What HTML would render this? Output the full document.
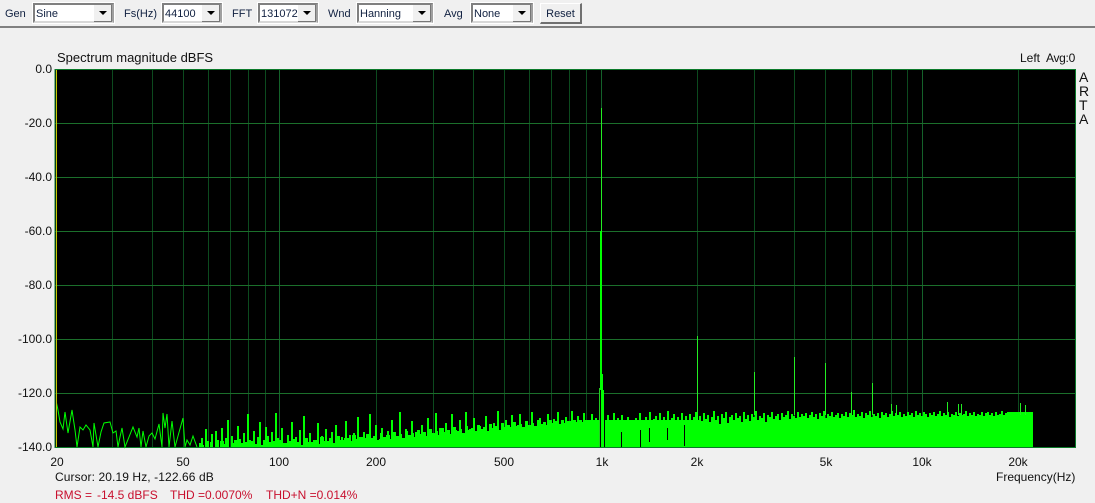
<!DOCTYPE html>
<html><head><meta charset="utf-8"><style>
html,body{margin:0;padding:0;background:#f0f0f0}
#p{position:relative;width:1095px;height:503px;overflow:hidden;background:#f0f0f0;font:12px/14px "Liberation Sans",sans-serif;color:#111}
.t{position:absolute;white-space:pre}
.r{text-align:right;width:50px;left:2px}
.c{text-align:center;width:60px}
.lb{font-size:11px;color:#102040;top:7px}
.cb{position:absolute;top:3px;height:20px;box-sizing:border-box;border:2px solid;border-color:#808080 #a0a0a0 #d8d8d8 #808080;background:#fff;outline:1px solid #fff;font-size:11px;line-height:19px;padding-left:1px;color:#102040}
.cb i{position:absolute;right:0;top:0;width:17px;height:16px;background:#f0f0f0;border-right:1px solid #777;border-bottom:1px solid #777}
.cb i:after{content:"";position:absolute;left:5px;top:6px;border:4px solid transparent;border-top:4px solid #000;border-bottom:0}
.red{color:#c8102e}
</style></head><body><div id="p">
<span class="t lb" style="left:5px">Gen</span>
<div class="cb" style="left:33px;width:81px">Sine<i></i></div>
<span class="t lb" style="left:124px">Fs(Hz)</span>
<div class="cb" style="left:162px;width:60px">44100<i></i></div>
<span class="t lb" style="left:232px">FFT</span>
<div class="cb" style="left:258px;width:60px">131072<i></i></div>
<span class="t lb" style="left:328px">Wnd</span>
<div class="cb" style="left:357px;width:76px">Hanning<i></i></div>
<span class="t lb" style="left:444px">Avg</span>
<div class="cb" style="left:471px;width:62px">None<i></i></div>
<div style="position:absolute;left:540px;top:3px;width:42px;height:21px;box-sizing:border-box;border:1px solid;border-color:#fff #707070 #707070 #fff;background:#f0f0f0;font-size:11px;line-height:20px;text-align:center;color:#102040;border-bottom-width:2px;border-right-width:2px">Reset</div>
<div style="position:absolute;left:0;top:26px;width:1095px;height:2px;background:#808080"></div>

<span class="t" style="left:57px;top:51px;font-size:13px">Spectrum magnitude dBFS</span>
<span class="t" style="left:1020px;top:51px">Left</span>
<span class="t" style="left:1046px;top:51px;letter-spacing:-.3px">Avg:0</span>
<span class="t" style="left:1079px;top:70px;font-size:14px">A</span>
<span class="t" style="left:1079px;top:84px;font-size:14px">R</span>
<span class="t" style="left:1079px;top:98px;font-size:14px">T</span>
<span class="t" style="left:1079px;top:112px;font-size:14px">A</span>

<span class="t r" style="top:62px">0.0</span>
<span class="t r" style="top:116px">-20.0</span>
<span class="t r" style="top:170px">-40.0</span>
<span class="t r" style="top:224px">-60.0</span>
<span class="t r" style="top:278px">-80.0</span>
<span class="t r" style="top:332px">-100.0</span>
<span class="t r" style="top:386px">-120.0</span>
<span class="t r" style="top:440px">-140.0</span>

<svg style="position:absolute;left:0;top:0" width="1095" height="503" shape-rendering="crispEdges">
<rect x="55" y="69" width="1021" height="379" fill="#000"/>
<path fill="none" stroke="#0c4a1e" d="M112.5 69V447M152.5 69V447M183.5 69V447M208.5 69V447M230.5 69V447M248.5 69V447M265.5 69V447M376.5 69V447M433.5 69V447M473.5 69V447M504.5 69V447M529.5 69V447M551.5 69V447M569.5 69V447M586.5 69V447M697.5 69V447M754.5 69V447M794.5 69V447M825.5 69V447M851.5 69V447M872.5 69V447M891.5 69V447M907.5 69V447M1018.5 69V447"/>
<path fill="none" stroke="#14622a" d="M279.5 69V447M601.5 69V447M922.5 69V447"/>
<path fill="none" stroke="#1b6f2b" d="M55 123.5H1075M55 177.5H1075M55 231.5H1075M55 285.5H1075M55 339.5H1075M55 393.5H1075"/>
<path fill="none" stroke="#0b7a2a" d="M55 69.5H1075.5V447.5H55Z"/>

<!-- low-frequency trace -->
<path shape-rendering="auto" fill="none" stroke="#00ff00" d="M56.5 403L58 410L60 422L63 429L65 412L68 433L72 410L75 430L77 447L80 427L83 430L86 425L90 430L93 447L94 423L98 447L101 432L104 423L110 422L113 433L116 431L118 447L120 437L122 428L125 447L133 427L137 437L139 428L141 447L143 431L146 447L149 436L152 433L155 439L159 424L162 447L163 413L165 428L167 414L169 447L172 421L175 447L178 436L183 418L185 447L187 440L190 445L193 436L197 447"/>
<!-- underlying mass -->
<path fill="#00ff00" d="M200 447V445h4V447h6V442h3V447h7V441h4V444h5V447h5V440h4V443h5V447h5V441h5V444h4V447h6V440h4V442h4V446h6V440h5V443h5V447h4V439h4V442h5V445h4V438h4V442h5V440h4V444h3V437h4V441h5V439h4V443h4V436h3V440h4V438h5V442h3V435h4V439h3V437h4V441h3V434h4V438h3V436h4V440h3V433h3V437h3V435h4V439h3V432h3V436h3V434h3V438h3V431h3V435h3V433h3V437h3V430h3V434h3V432h3V436h3V429h3V433h3V431h3V435h3V428h3V432h3V430h3V434h3V427h3V431h3V429h3V433h3V426h3V430h3V428h3V431h3V425h3V429h3V427h3V431h3V424h3V428h3V426h3V430h3V423h3V427h3V425h3V428h3V422h3V426h3V424h3V427h3V421h3V425h3V423h3V426h3V420h3V424h3V422h3V425h3V420h3V423h3V421h3V424h3V420h3V423h3V421h3V424h3V420h3V422h3V420h3V423h3V420H700V447Z"/>
<!-- noise floor, 2px bars -->
<path fill="#00ff00" d="M197 447V447h2V443h2V438h2V447h2V429h2V441h2V447h2V434h2V447h2V431h2V440h2V447h2V428h2V444h2V438h2V420h2V447h2V436h2V443h2V447h2V426h2V439h2V447h2V433h2V442h2V414h2V440h2V447h2V431h2V444h2V437h2V422h2V445h2V447h2V427h2V436h2V447h2V432h2V441h2V413h2V438h2V447h2V428h2V444h2V447h2V435h2V441h2V422h2V447h2V437h2V443h2V430h2V446h2V416h2V440h2V447h2V433h2V444h2V445h2V441h2V423h2V447h2V436h2V442h2V429h2V447h2V438h2V432h2V444h2V425h2V442h2V447h2V437h2V443h2V421h2V446h2V435h2V441h2V433h2V444h2V417h2V440h2V447h2V432h2V438h2V443h2V414h2V441h2V436h2V425h2V444h2V439h2V428h2V443h2V447h2V431h2V445h2V420h2V440h2V436h2V444h2V412h2V438h2V442h2V429h2V443h2V436h2V421h2V441h2V432h2V439h2V445h2V425h2V437h2V443h2V418h2V436h2V441h2V443h2V413h2V437h2V428h2V439h2V444h2V423h2V436h2V441h2V414h2V435h2V430h2V439h2V420h2V443h2V433h2V412h2V437h2V429h2V441h2V418h2V434h2V438h2V426h2V444h2V431h2V416h2V437h2V428h2V435h2V423h2V439h2V411h2V436h2V429h2V434h2V420h2V441h2V427h2V415h2V436h2V432h2V425h2V414h2V434h2V429h2V421h2V437h2V428h2V412h2V433h2V426h2V436h2V418h2V431h2V424h2V438h2V414h2V430h2V426h2V419h2V433h2V412h2V428h2V423h2V435h2V417h2V429h2V421h2V411h2V431h2V425h2V416h2V430h2V422h2V413h2V428h2V420h2V427h2V414h2V432h2V418h2V424h2V412h2V427h2V419h2V430h2V415h2V425h2V421h2V413h2V428h2V418h2V423h2V415h2V427h2V420h2V417h2V447h2V432h2V430h2V418h2V426h2V413h2V420h2V424h2V417h2V421h2V412h2V426h2V419h2V416h2V423h2V413h2V428h2V417h2V421h2V411h2V424h2V418h2V414h2V432h2V417h2V422h2V413h2V421h2V416h2V428h2V414h2V420h2V417h2V412h2V424h2V416h2V421h2V413h2V419h2V415h2V422h2V417h2V411h2V420h2V416h2V424h2V414h2V418h2V412h2V423h2V417h2V415h2V420h2V413h2V418h2V416h2V422h2V412h2V419h2V415h2V421h2V414h2V417h2V411h2V420h2V416h2V418h2V413h2V422h2V415h2V417h2V412h2V419h2V416h2V414h2V420h2V413h2V417h2V415h2V411h2V419h2V414h2V416h2V418h2V412h2V417h2V414h2V416h2V413h2V418h2V415h2V412h2V417h2V414h2V419h2V413h2V416h2V411h2V418h2V414h2V416h2V412h2V417h2V415h2V413h2V418h2V414h2V416h2V412h2V417h2V413h2V415h2V410h2V417h2V414h2V416h2V412h2V418h2V413h2V415h2V411h2V417h2V414h2V416h2V413h2V418h2V412h2V415h2V413h2V417h2V414h2V411h2V416h2V413h2V415h2V412h2V417h2V414h2V416h2V412h2V415h2V413h2V417h2V411h2V415h2V413h2V416h2V412h2V414h2V417h2V413h2V415h2V412h2V416h2V414h2V411h2V416h2V413h2V415h2V412h2V417h2V414h2V415h2V412h2V416h2V413h2V415h2V414h2V411h2V416h2V413h2V415h2V412h2V416h2V414h2V415h2V412h2V416h2V413h2V412h2V415h2V413h2V416h2V412h2V415h2V414h2V411h2V415h2V413h2V412H1033V447Z"/>
<!-- dropouts -->
<path fill="none" stroke="#000" d="M600.5 390V447M604.5 400V447M621.5 432V447M640.5 430V447M649.5 428V442M667.5 428V440M684.5 425V446"/>
<!-- peaks -->
<path fill="none" stroke="#22ee22" d="M601.5 108V231"/>
<rect x="600" y="231" width="2" height="159" fill="#00ff00"/>
<rect x="601" y="390" width="3" height="57" fill="#00ff00"/>
<rect x="602" y="374" width="1" height="16" fill="#00ff00"/>
<rect x="599" y="388" width="1" height="59" fill="#22cc22"/>
<path fill="none" stroke="#22ee22" d="M697.5 336V420M754.5 372V415M794.5 357V415M825.5 363V415M851.5 392V415M872.5 383V415M891.5 404V415M896.5 405V415M947.5 402V415M958.5 404V415M961.5 404V415M1020.5 403V415M1025.5 405V415"/>
<path fill="none" stroke="#c8c800" d="M56.5 70V447"/>
</svg>

<span class="t c" style="left:27px;top:455px">20</span>
<span class="t c" style="left:153px;top:455px">50</span>
<span class="t c" style="left:249px;top:455px">100</span>
<span class="t c" style="left:346px;top:455px">200</span>
<span class="t c" style="left:474px;top:455px">500</span>
<span class="t c" style="left:572px;top:455px">1k</span>
<span class="t c" style="left:667px;top:455px">2k</span>
<span class="t c" style="left:796px;top:455px">5k</span>
<span class="t c" style="left:892px;top:455px">10k</span>
<span class="t c" style="left:988px;top:455px">20k</span>
<span class="t" style="left:996px;top:470px">Frequency(Hz)</span>
<span class="t" style="left:55px;top:470px;letter-spacing:.1px">Cursor: 20.19 Hz, -122.66 dB</span>
<span class="t red" style="left:55px;top:488px">RMS =</span>
<span class="t red" style="left:97px;top:488px">-14.5 dBFS</span>
<span class="t red" style="left:170px;top:488px">THD =0.0070%</span>
<span class="t red" style="left:266px;top:488px">THD+N =0.014%</span>
</div></body></html>
